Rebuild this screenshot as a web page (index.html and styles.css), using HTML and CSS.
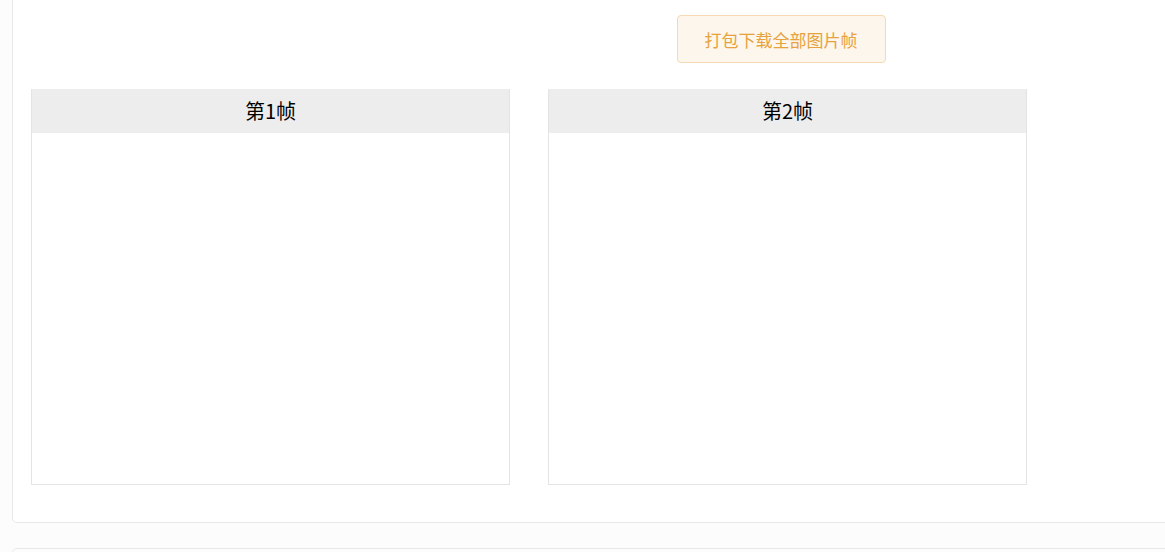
FILE: index.html
```html
<!DOCTYPE html>
<html lang="zh-CN">
<head>
  <meta charset="UTF-8" />
  <meta name="viewport" content="width=device-width, initial-scale=1.0"/>
  <title>图片帧</title>
  <link rel="stylesheet" href="styles.css">
</head>

<body>
  <div class="panel">
    <div class="toolbar">
      <button class="download-btn">打包下载全部图片帧</button>
    </div>

    <div class="frame-list">
      <div class="frame">
        <div class="frame-title">第1帧</div>
        <div class="frame-body"></div>
      </div>
      <div class="frame">
        <div class="frame-title">第2帧</div>
        <div class="frame-body"></div>
      </div>
    </div>
  </div>

  <div class="panel next"></div>
</body>
</html>
```

FILE: styles.css
```css
html, body {
  margin: 0;
  height: 100%;
  overflow: hidden;
  font-family: "Noto Sans CJK SC", "Liberation Sans", sans-serif;
  background-color: #fcfcfc;
}

body {
  padding-left: 12px;
}

.panel {
  width: 1500px;
  background-color: white;
  border: 1px solid #e8e8e8;
  border-top: none;
  border-radius: 0 0 5px 5px;
  padding: 15px 18px 37px 18px;
}

.panel.next {
  margin-top: 25px;
  height: 40px;
  padding: 0;
  border-top: 1px solid #e8e8e8;
  border-radius: 5px 5px 0 0;
  background-color: #fcfcfc;
}

.toolbar {
  display: flex;
  justify-content: center;
  margin-bottom: 26px;
}

.download-btn {
  height: 48px;
  padding: 0 27px;
  font-family: inherit;
  font-size: 17px;
  color: #e6a23c;
  background-color: #fdf6ec;
  border: 1px solid #f5dab1;
  border-radius: 4px;
  cursor: pointer;
}

.frame-list {
  display: flex;
  gap: 38px;
}

.frame {
  width: 477px;
  border: 1px solid #e4e4e4;
  border-top: none;
}

.frame-title {
  height: 44px;
  line-height: 44px;
  text-align: center;
  font-size: 20px;
  color: #000;
  background-color: #ededed;
}

.frame-body {
  height: 351px;
  background-color: white;
}
```
